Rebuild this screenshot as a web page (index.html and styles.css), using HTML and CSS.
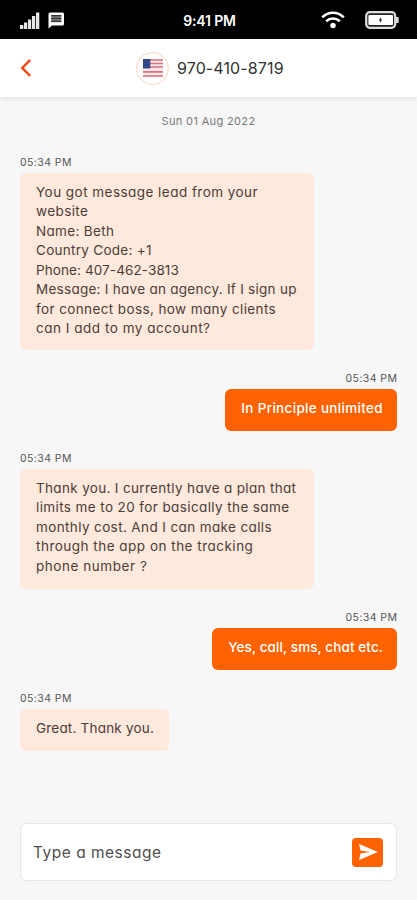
FILE: index.html
```html
<!DOCTYPE html>
<html lang="en">
<head>
<meta charset="utf-8">
<meta name="viewport" content="width=device-width, initial-scale=1">
<title>Messages</title>
<link rel="stylesheet" href="styles.css">
</head>
<body>
<div class="status">
  <div class="status-left">
    <svg class="signal" width="20" height="17" viewBox="0 0 20 17" fill="#e8e8e8"><path d="M0 13h3.300V17H0zM4 10.500h3.200V17H4zM8 7.500h3.200V17H8zM12 4h3.200v13H12zM16 .5h3.300V17H16z"/></svg>
    <svg class="bubble-icon" width="17" height="17" viewBox="0 0 17 17"><path d="M2 .5h12.500a1.500 1.500 0 0 1 1.500 1.500v10a1.500 1.500 0 0 1-1.500 1.500H4L.5 16.500V2A1.500 1.500 0 0 1 2 .5z" fill="#fff"/><path fill="#777" d="M3.200 3h10.100v7.200H3.200z"/><path d="M3.200 3.700h10.100M3.200 6.500h10.100M3.200 9.400h10.100" stroke="#333" stroke-width="1.200"/></svg>
  </div>
  <div class="clock">9:41 PM</div>
  <div class="status-right">
    <svg width="24" height="18" viewBox="0 0 24 18" fill="none" stroke="#fff" stroke-width="2.500"><path d="M1.200 6.300C7.500.2 16.500.2 22.800 6.300M5.200 10.200c4-3.600 9.600-3.600 13.600 0"/><circle cx="12" cy="14.500" r="2.700" fill="#fff" stroke="none"/></svg>
    <svg width="34" height="18" viewBox="0 0 34 18"><rect x="1.200" y="1.200" width="29" height="15.600" rx="3.500" fill="#222" stroke="#ddd" stroke-width="2.200"/><rect x="3.400" y="4" width="24.600" height="10" rx="1" fill="#fff"/><path d="M31 6h1.500a1.200 1.200 0 0 1 1.200 1.200v3.600a1.200 1.200 0 0 1-1.200 1.200H31z" fill="#ddd"/><path d="M16 6l-2.300 3.500h1.600L15 12l2.200-3.500h-1.500z" fill="#111"/></svg>
  </div>
</div>
<header class="header">
  <svg class="back" width="12" height="18" viewBox="0 0 12 18" fill="none" stroke="#f4511e" stroke-width="2.500"><path d="M10.200 1L2.200 8.900l8 7.900"/></svg>
  <div class="contact">
    <span class="avatar"><svg width="20" height="18" viewBox="0 0 20 18"><path fill="#f7e9ea" d="M0 0h20v18H0z"/><path d="M0 1h20M0 4.500h20M0 8h20M0 12.800h20M0 17h20" stroke="#d8727e" stroke-width="1.700"/><path fill="#2d4384" d="M0 0h7.300v9.500H0z"/><path d="M1.500 2h5M1.500 4.700h5M1.500 7.300h5" stroke="#6479a8" stroke-width=".7" stroke-dasharray="1 1"/></svg></span>
    <span class="number">970-410-8719</span>
  </div>
</header>
<main class="chat">
  <div class="date">Sun 01 Aug 2022</div>
  <section class="msg in">
    <time>05:34 PM</time>
    <p class="wide"><span class="a1">You got message lead from your</span><span class="a2">website</span><span class="a3">Name: Beth</span><span class="a4">Country Code: +1</span><span class="a5">Phone: 407-462-3813</span><span class="a6">Message: I have an agency. If I sign up</span><span class="a7">for connect boss, how many clients</span><span class="a8">can I add to my account?</span></p>
  </section>
  <section class="msg out">
    <time>05:34 PM</time>
    <p><span class="b1">In Principle unlimited</span></p>
  </section>
  <section class="msg in">
    <time>05:34 PM</time>
    <p class="wide plan"><span class="c1">Thank you. I currently have a plan that</span><span class="c2">limits me to 20 for basically the same</span><span class="c3">monthly cost. And I can make calls</span><span class="c4">through the app on the tracking</span><span class="c5">phone number ?</span></p>
  </section>
  <section class="msg out">
    <time>05:34 PM</time>
    <p><span class="d1">Yes, call, sms, chat etc.</span></p>
  </section>
  <section class="msg in last">
    <time>05:34 PM</time>
    <p><span class="e1">Great. Thank you.</span></p>
  </section>
</main>
<footer class="composer">
  <span class="placeholder">Type a message</span>
  <button class="send" aria-label="Send"><svg width="19" height="16" viewBox="0 0 19 16"><path fill="#fff" d="M0 0l19 8L0 16l1.500-6.500L11 8 1.500 6.500z"/></svg></button>
</footer>
</body>
</html>
```
FILE: styles.css
```css
* { box-sizing: border-box; }
body {
  margin: 0;
  width: 417px;
  height: 900px;
  display: flex;
  flex-direction: column;
  background: #f7f7f7;
  color: #4a3d38;
  font-family: Inter, "Open Sans", sans-serif;
  font-feature-settings: "cv11";
  overflow: hidden;
}
.status {
  height: 39px;
  flex: none;
  display: grid;
  grid-template-columns: 1fr auto 1fr;
  align-items: center;
  padding: 1px 18px 0 20px;
  background: #000;
  color: #fff;
}
.status-left, .status-right { display: flex; align-items: center; }
.status-left { gap: 8px; }
.status-right { justify-content: flex-end; gap: 20px; }
.clock { font-size: 14px; font-weight: 600; letter-spacing: -0.15px; }
.header {
  height: 58px;
  flex: none;
  display: flex;
  align-items: center;
  padding: 0 20px;
  background: #fff;
  box-shadow: 0 1px 5px rgba(0, 0, 0, .12);
}
.contact { display: flex; align-items: center; gap: 8px; margin-left: 104px; }
.avatar {
  width: 33px;
  height: 33px;
  display: flex;
  align-items: center;
  justify-content: center;
  border: 1px solid #fdd3bf;
  border-radius: 50%;
}
.number { font-size: 16px; letter-spacing: .12px; color: #333; white-space: nowrap; }
.chat { flex: 1; padding: 15px 20px 0; }
.date { height: 18px; line-height: 18px; font-size: 11px; letter-spacing: .35px; text-align: center; color: #777; }
.msg { display: flex; flex-direction: column; align-items: flex-start; margin-top: 19px; }
.date + .msg { margin-top: 24px; }
.msg.out { align-items: flex-end; margin-top: 20px; }
.msg.last { margin-top: 20px; }
time { height: 18px; line-height: 18px; font-size: 10.500px; letter-spacing: .42px; color: #555; margin-bottom: 1px; }
.out time { margin-right: -0.4px; }
.msg p {
  margin: 0;
  padding: 9.500px 15px 10.500px 16px;
  font-size: 13.500px;
  line-height: 19.500px;
  background: #ffe8dc;
  border-radius: 6px;
  min-height: 42px;
}
.msg p span { display: block; width: max-content; }
.msg p.wide { width: 294px; height: 177px; }
.msg p.plan { height: 120px; }
.msg.out p { background: #ff6200; color: #fff; font-weight: 500; padding-right: 14px; }
.a1 { letter-spacing: .46px; }
.a2 { letter-spacing: .4px; }
.a3 { letter-spacing: .33px; }
.a4 { letter-spacing: .28px; }
.a5 { letter-spacing: .1px; }
.a6 { letter-spacing: .27px; }
.a7 { letter-spacing: .39px; }
.a8 { letter-spacing: .52px; }
.b1 { letter-spacing: .32px; }
.c1 { letter-spacing: .33px; }
.c2 { letter-spacing: .39px; }
.c3 { letter-spacing: .38px; }
.c4 { letter-spacing: .49px; }
.c5 { letter-spacing: .55px; }
.d1 { letter-spacing: .1px; }
.e1 { letter-spacing: .2px; }
.composer {
  flex: none;
  height: 58px;
  margin: 0 20px 19px;
  padding: 0 13px 0 12px;
  display: flex;
  align-items: center;
  justify-content: space-between;
  background: #fff;
  border: 1px solid #e6e6e6;
  border-radius: 7px;
}
.placeholder { font-size: 15.500px; letter-spacing: .5px; color: #4f4f4f; }
.send {
  width: 31px;
  height: 29px;
  display: flex;
  align-items: center;
  justify-content: center;
  padding: 0 0 0 2px;
  border: 0;
  border-radius: 4px;
  background: #ff6200;
}
```
